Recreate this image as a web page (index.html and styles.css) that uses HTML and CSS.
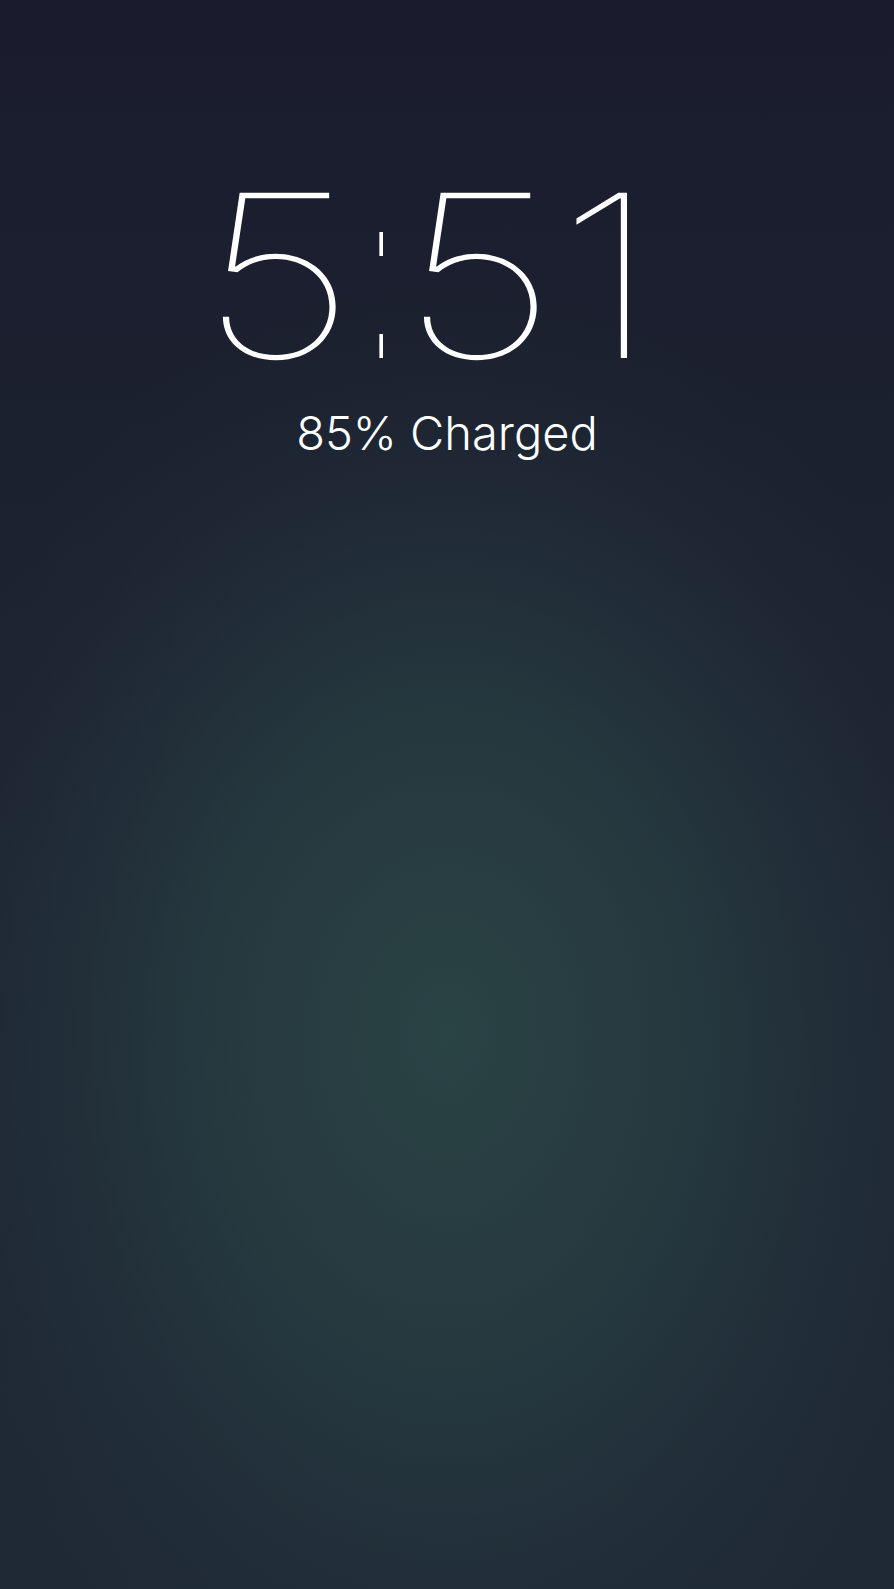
FILE: index.html
```html
<!DOCTYPE html>
<html lang="en">
<head>
<meta charset="utf-8">
<title>Lock Screen</title>
<link rel="stylesheet" href="styles.css">
</head>
<body>
<main class="lock">
  <div class="clock"><span class="digits">5</span><span class="colon">:</span><span class="digits">51</span></div>
  <div class="status">85% Charged</div>
</main>
</body>
</html>
```
FILE: styles.css
```css
html, body {
  margin: 0;
  padding: 0;
  height: 100%;
}
body {
  min-height: 100vh;
  color: #ffffff;
  font-family: Inter, "Liberation Sans", sans-serif;
  background:
    radial-gradient(ellipse 63% 48% at 50% 65%,
      rgba(42, 67, 69, 1) 0%,
      rgba(42, 67, 69, 0.6) 45%,
      rgba(42, 67, 69, 0.3) 65%,
      rgba(42, 67, 69, 0.08) 85%,
      rgba(42, 67, 69, 0) 100%),
    linear-gradient(180deg, #1a1c2d 0%, #1e2633 60%, #1f2936 100%);
}
.lock {
  display: flex;
  flex-direction: column;
  align-items: center;
  padding-top: 162px;
}
.clock {
  margin-right: 36px;
  font-size: 227px;
  font-weight: 100;
  line-height: 1;
  white-space: nowrap;
  transform: scaleX(1.22);
}
.colon {
  display: inline-block;
  margin: 0 -17px 0 -12px;
  font-family: "Liberation Sans", Arial, sans-serif;
  font-weight: 400;
  font-size: 237px;
  line-height: 0;
  transform: scaleX(0.13);
}
.status {
  margin-top: 16px;
  font-size: 47px;
  font-weight: 300;
  line-height: 1.2;
}
```
